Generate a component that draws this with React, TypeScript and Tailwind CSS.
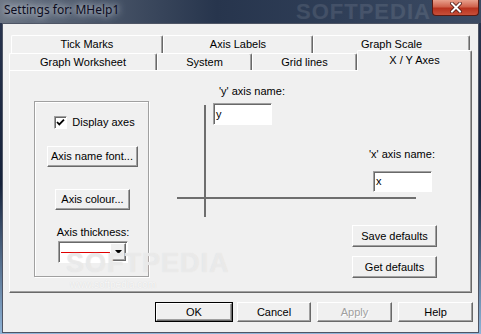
import React from 'react';

const raised =
  'bg-[#f0f0f0] border border-t-white border-l-white border-r-[#696969] border-b-[#696969] shadow-[inset_-1px_-1px_0_#a0a0a0]';
const sunken =
  'bg-white border border-t-[#a0a0a0] border-l-[#a0a0a0] border-r-white border-b-white shadow-[inset_1px_1px_0_#696969]';

const Button = ({ label, className = '', disabled = false }: { label: string; className?: string; disabled?: boolean }) => (
  <div className={`${raised} flex items-center justify-center ${className}`}>
    <span className={disabled ? 'text-[#a0a0a0] [text-shadow:1px_1px_0_#fff]' : 'text-black'}>{label}</span>
  </div>
);

const Tab = ({ label, w }: { label: string; w: string }) => (
  <div
    className={`${w} h-full flex items-start justify-center pt-[2px] border-t border-l border-t-white border-l-white border-r border-r-[#696969] shadow-[inset_-1px_0_0_#a0a0a0] rounded-t-[2px]`}
  >
    {label}
  </div>
);

export default function App() {
  return (
    <div
      className="w-[481px] h-[334px] flex flex-col overflow-hidden bg-[linear-gradient(180deg,#2a3650_0%,#16223a_55%,#8fb4d8_100%)] text-[11px] leading-[13px] text-black"
      style={{ fontFamily: '"Liberation Sans", Arial, sans-serif' }}
    >
      {/* title bar */}
      <div className="relative h-[23px] flex items-start bg-[linear-gradient(90deg,#6c7584_0%,#4a5669_20%,#27354d_45%,#2f3e57_70%,#3c4b63_100%)]">
        <span
          className="ml-[4px] mt-[2px] text-[12px] leading-[16px] text-[#0c0c20] [text-shadow:0_0_6px_#c8ced8,0_0_10px_#c8ced8]"
          style={{ fontFamily: '"Noto Sans", "Open Sans", sans-serif' }}
        >
          Settings for: MHelp1
        </span>
        <span className="absolute left-[296px] top-[1px] text-[22px] leading-[22px] font-bold tracking-[1px] text-white/10">
          SOFTPEDIA
        </span>
        <div className="ml-auto mr-[2px] w-[47px] h-[16px] rounded-b-[4px] border border-t-0 border-[#5a1a12] bg-[linear-gradient(180deg,#e8a08c_0%,#d0624c_45%,#b8321e_55%,#c8503a_100%)] flex items-center justify-center">
          <svg width="12" height="11" viewBox="0 0 12 11">
            <path d="M2 1.5 L10 9.5 M10 1.5 L2 9.5" stroke="#4a1410" strokeWidth="3.6" strokeLinecap="square" />
            <path d="M2 1.5 L10 9.5 M10 1.5 L2 9.5" stroke="#fff" strokeWidth="2" strokeLinecap="square" />
          </svg>
        </div>
      </div>

      {/* client area */}
      <div className="mx-[2px] mb-[1px] flex-1 flex flex-col bg-[#f0f0f0] border border-[#4e5565]">
        {/* back tab row */}
        <div className="ml-[8px] mt-[11px] h-[18px] flex">
          <Tab label="Tick Marks" w="w-[152px]" />
          <Tab label="Axis Labels" w="w-[150px]" />
          <Tab label="Graph Scale" w="w-[157px]" />
        </div>
        {/* front tab row */}
        <div className="ml-[6px] h-[17px] flex items-end">
          <Tab label="Graph Worksheet" w="w-[148px]" />
          <Tab label="System" w="w-[95px]" />
          <Tab label="Grid lines" w="w-[105px]" />
          <div className="relative z-10 w-[115px] h-[21px] mb-[-1px] flex items-start justify-center pt-[3px] bg-[#f0f0f0] border-t border-l border-t-white border-l-white border-r border-r-[#696969] shadow-[inset_-1px_0_0_#a0a0a0] rounded-t-[2px]">
            X / Y Axes
          </div>
        </div>

        {/* panel */}
        <div className="relative ml-[6px] w-[463px] h-[223px] flex items-start border border-t-white border-l-white border-r-[#696969] border-b-[#696969] shadow-[inset_-1px_-1px_0_#a0a0a0]">
          {/* group box */}
          <div className="ml-[24px] mt-[30px] w-[115px] h-[176px] flex flex-col items-center pl-[2px] border border-[#a0a0a0] shadow-[inset_1px_1px_0_#fff,1px_1px_0_#fff]">
            <div className="mt-[14px] ml-[4px] flex items-center gap-[5px] h-[13px]">
              <div className={`${sunken} w-[13px] h-[13px] flex items-center justify-center`}>
                <svg width="9" height="9" viewBox="0 0 9 9">
                  <path d="M1 4 L3.3 6.4 L8 1.6" stroke="#000" strokeWidth="1.8" fill="none" />
                </svg>
              </div>
              <span>Display axes</span>
            </div>
            <Button label="Axis name font..." className="mt-[17px] w-[91px] h-[21px] -ml-[1px]" />
            <Button label="Axis colour..." className="mt-[22px] w-[75px] h-[21px]" />
            <span className="mt-[16px] ml-[1px]">Axis thickness:</span>
            <div className={`${sunken} mt-[2px] ml-[1px] w-[70px] h-[22px] flex items-center`}>
              <div className="ml-[2px] w-[50px] h-[1px] mt-[1px] bg-[#e00000]" />
              <div className={`${raised} ml-auto mr-[1px] w-[16px] h-[18px] flex items-center justify-center`}>
                <svg width="7" height="4" viewBox="0 0 7 4">
                  <path d="M0 0 H7 L3.5 4 Z" fill="#000" />
                </svg>
              </div>
            </div>
          </div>

          {/* axes area */}
          <div className="relative flex-1 h-full flex flex-col items-start">
            <svg className="absolute left-[28px] top-[34px]" width="239" height="112" viewBox="0 0 239 112">
              <rect x="27" y="0" width="2" height="112" fill="#6e6e6e" />
              <rect x="0" y="92" width="239" height="2" fill="#6e6e6e" />
            </svg>
            <span className="ml-[70px] mt-[14px]">'y' axis name:</span>
            <div className={`${sunken} ml-[64px] mt-[5px] w-[59px] h-[22px] pl-[2px] flex items-center`}>y</div>
            <span className="ml-[220px] mt-[23px]">'x' axis name:</span>
            <div className={`${sunken} ml-[224px] mt-[10px] w-[59px] h-[21px] pl-[2px] flex items-center`}>x</div>
            <Button label="Save defaults" className="ml-[203px] mt-[33px] w-[85px] h-[22px]" />
            <Button label="Get defaults" className="ml-[203px] mt-[9px] w-[85px] h-[22px]" />
          </div>

          {/* watermark */}
          <span className="absolute left-[56px] top-[178px] text-[27px] leading-[28px] font-bold tracking-[1px] text-[#f4f4f4]/60 [text-shadow:0_0_1px_#dadada]">
            SOFTPEDIA
          </span>
          <span className="absolute left-[60px] top-[208px] text-[10px] leading-[12px] text-[#f7f7f7] [text-shadow:0_0_1px_#d4d4d4]">
            www.softpedia.com
          </span>
        </div>

        {/* dialog buttons */}
        <div className="mt-[9px] mr-[5px] flex justify-end">
          <div className="border border-black">
            <Button label="OK" className="w-[76px] h-[18px]" />
          </div>
          <Button label="Cancel" className="ml-[4px] w-[74px] h-[20px]" />
          <Button label="Apply" disabled className="ml-[6px] w-[75px] h-[20px]" />
          <Button label="Help" className="ml-[6px] w-[75px] h-[20px]" />
        </div>
      </div>
    </div>
  );
}
